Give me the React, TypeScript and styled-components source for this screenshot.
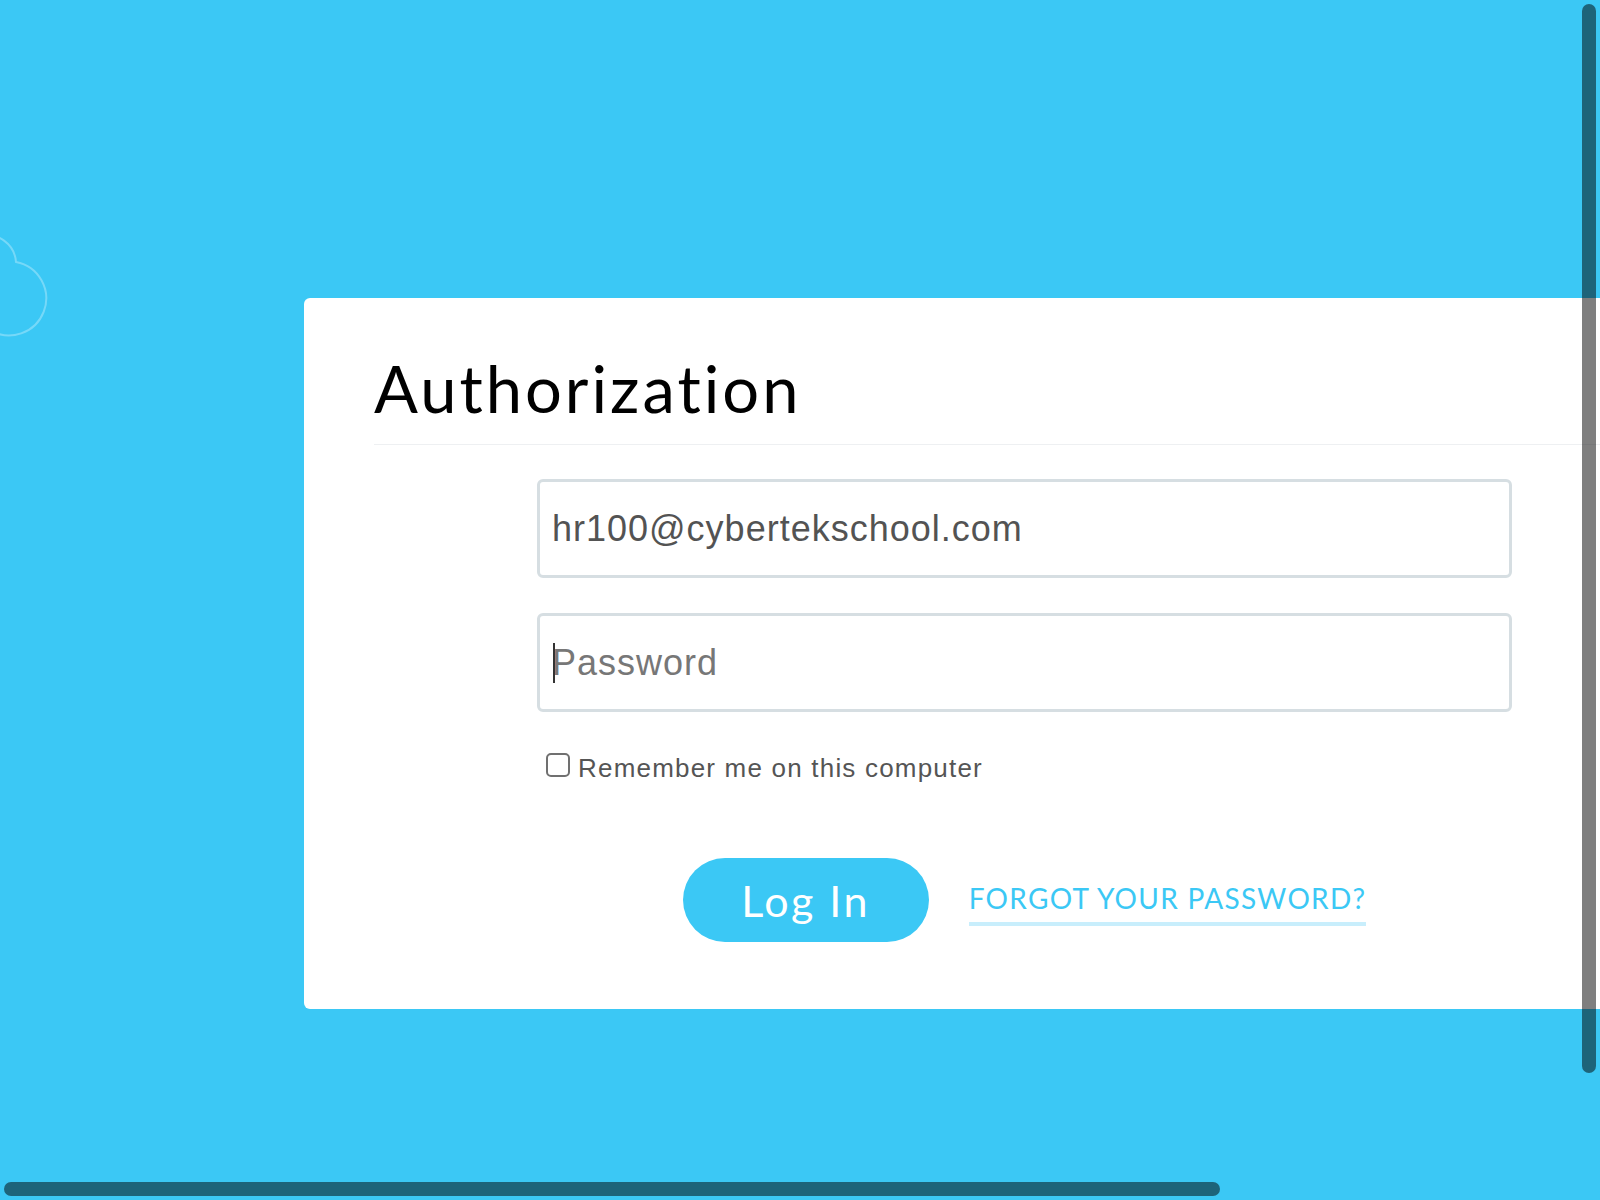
import React from "react";
import styled, { createGlobalStyle } from "styled-components";

const Global = createGlobalStyle`
  html, body { margin: 0; padding: 0; }
  body {
    width: 1600px;
    height: 1200px;
    overflow: hidden;
    background: #3bc8f5;
    font-family: "Liberation Sans", Arial, sans-serif;
  }
`;

const Page = styled.div`
  position: relative;
  width: 1600px;
  height: 1200px;
  overflow: hidden;
  background: #3bc8f5;
  padding: 298px 0 0 304px;
  box-sizing: border-box;
`;

const Cloud = styled.svg`
  position: absolute;
  left: 0;
  top: 220px;
`;

const Card = styled.section`
  width: 1400px;
  height: 711px;
  background: #fff;
  border-radius: 6px 0 0 6px;
  box-sizing: border-box;
  padding: 58px 0 0 70px;
`;

const Header = styled.header`
  border-bottom: 1px solid #eef0f2;
  padding-bottom: 23px;
`;

const Title = styled.h1`
  margin: 0;
  font-family: Lato, "Open Sans", sans-serif;
  font-weight: 400;
  font-size: 65px;
  line-height: 65px;
  letter-spacing: 3px;
  font-variant-ligatures: none;
  color: #000;
`;

const Form = styled.form`
  width: 975px;
  margin: 34px 0 0 163px;
  display: flex;
  flex-direction: column;
`;

const Field = styled.div`
  position: relative;
  height: 99px;
  & + & {
    margin-top: 35px;
  }
`;

const Input = styled.input`
  width: 100%;
  height: 100%;
  box-sizing: border-box;
  border: 3px solid #d6dee2;
  border-radius: 6px;
  padding: 0 12px;
  font-family: "Liberation Sans", Arial, sans-serif;
  font-size: 36px;
  letter-spacing: 1px;
  color: #535353;
  background: #fff;
  outline: none;
  &::placeholder {
    color: #777;
  }
`;

const Caret = styled.span`
  position: absolute;
  left: 16px;
  top: 30px;
  width: 2px;
  height: 40px;
  background: #333;
`;

const RememberRow = styled.label`
  display: flex;
  align-items: flex-start;
  gap: 8px;
  margin: 41px 0 0 9px;
`;

const Check = styled.input`
  appearance: none;
  margin: 0;
  width: 24px;
  height: 24px;
  box-sizing: border-box;
  border: 2px solid #707070;
  border-radius: 5px;
  background: #fff;
`;

const RememberText = styled.span`
  font-family: "Liberation Sans", Arial, sans-serif;
  font-size: 26px;
  line-height: 30px;
  letter-spacing: 1.2px;
  color: #555;
`;

const Actions = styled.div`
  display: flex;
  justify-content: center;
  align-items: center;
  gap: 40px;
  margin-top: 75px;
`;

const LoginButton = styled.button`
  width: 246px;
  height: 84px;
  border: none;
  border-radius: 42px;
  background: #3bc8f5;
  color: #fff;
  font-family: Lato, "Open Sans", sans-serif;
  font-size: 43px;
  font-weight: 400;
  letter-spacing: 2.5px;
  padding: 0;
`;

const ForgotLink = styled.a`
  margin-top: 10px;
  font-family: Lato, "Open Sans", sans-serif;
  font-size: 28px;
  line-height: 28px;
  letter-spacing: 1.3px;
  text-transform: uppercase;
  text-decoration: none;
  color: #3bc8f5;
  padding-bottom: 10px;
  border-bottom: 4px solid #c8eefc;
`;

const VScroll = styled.div`
  position: absolute;
  right: 4px;
  top: 4px;
  width: 14px;
  height: 1069px;
  border-radius: 7px;
  background: rgba(0, 0, 0, 0.5);
`;

const HScroll = styled.div`
  position: absolute;
  left: 4px;
  bottom: 4px;
  width: 1216px;
  height: 14px;
  border-radius: 7px;
  background: rgba(0, 0, 0, 0.5);
`;

export default function App() {
  return (
    <>
      <Global />
      <Page>
        <Cloud width="60" height="130" viewBox="0 220 60 130">
          <path
            d="M -20 236 A 29 29 0 0 1 16 262 A 37 37 0 1 1 -10 330"
            fill="none"
            stroke="rgba(255,255,255,0.3)"
            strokeWidth="2"
          />
        </Cloud>
        <Card>
          <Header>
            <Title>Authorization</Title>
          </Header>
          <Form onSubmit={(e) => e.preventDefault()}>
            <Field>
              <Input type="text" defaultValue="hr100@cybertekschool.com" />
            </Field>
            <Field>
              <Input type="password" placeholder="Password" />
              <Caret />
            </Field>
            <RememberRow>
              <Check type="checkbox" />
              <RememberText>Remember me on this computer</RememberText>
            </RememberRow>
            <Actions>
              <LoginButton type="submit">Log In</LoginButton>
              <ForgotLink href="#">Forgot your password?</ForgotLink>
            </Actions>
          </Form>
        </Card>
        <VScroll />
        <HScroll />
      </Page>
    </>
  );
}
